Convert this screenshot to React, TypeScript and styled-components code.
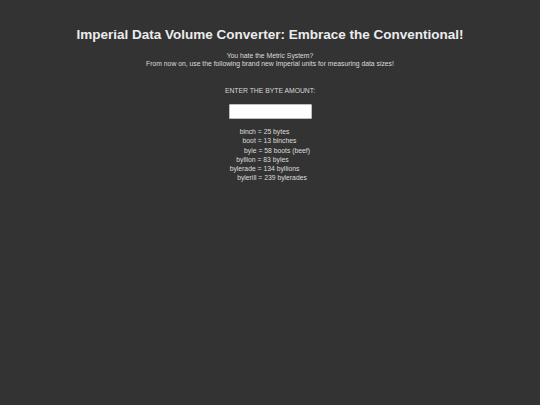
import React from "react";
import styled, { createGlobalStyle } from "styled-components";

const Global = createGlobalStyle`
  html, body { margin: 0; padding: 0; background: #333333; }
  body { font-family: "Liberation Sans", Arial, sans-serif; color: #e6e6e6; }
`;

const Page = styled.main`
  width: 540px;
  min-height: 405px;
  display: flex;
  flex-direction: column;
  align-items: center;
  padding-top: 26px;
  box-sizing: border-box;
`;

const Title = styled.h1`
  margin: 0;
  font-size: 13.5px;
  font-weight: bold;
  color: #ececec;
  line-height: 17px;
`;

const Intro = styled.p`
  margin: 9px 0 0;
  font-size: 6.8px;
  line-height: 7.5px;
  text-align: center;
  color: #dcdcdc;
`;

const Label = styled.label`
  margin-top: 20px;
  font-size: 6.8px;
  line-height: 8px;
  color: #d8d8d8;
  text-transform: uppercase;
`;

const Input = styled.input`
  margin-top: 8.5px;
  width: 83px;
  height: 15px;
  box-sizing: border-box;
  border: 1px solid #bdbdbd;
  border-radius: 1px;
  background: #ffffff;
  padding: 0 2px;
  font-size: 7px;
`;

const List = styled.ul`
  list-style: none;
  margin: 8.5px 0 0;
  padding: 0;
  display: flex;
  flex-direction: column;
  align-items: center;
`;

const Item = styled.li<{ $shift: number }>`
  font-size: 6.8px;
  line-height: 9.3px;
  color: #dcdcdc;
  transform: translateX(${(p) => p.$shift}px);
`;

const units = [
  { text: "binch = 25 bytes", shift: -5.5 },
  { text: "boot = 13 binches", shift: -0.5 },
  { text: "byle = 58 boots (beef)", shift: 7 },
  { text: "byllion = 83 byles", shift: -7.5 },
  { text: "bylerade = 134 byllions", shift: -5.5 },
  { text: "bylerill = 239 bylerades", shift: 2 },
];

export default function App() {
  return (
    <>
      <Global />
      <Page>
        <Title>Imperial Data Volume Converter: Embrace the Conventional!</Title>
        <Intro>
          You hate the Metric System?
          <br />
          From now on, use the following brand new Imperial units for measuring data sizes!
        </Intro>
        <Label htmlFor="bytes">Enter the byte amount:</Label>
        <Input id="bytes" type="text" />
        <List>
          {units.map((u) => (
            <Item key={u.text} $shift={u.shift}>
              {u.text}
            </Item>
          ))}
        </List>
      </Page>
    </>
  );
}
